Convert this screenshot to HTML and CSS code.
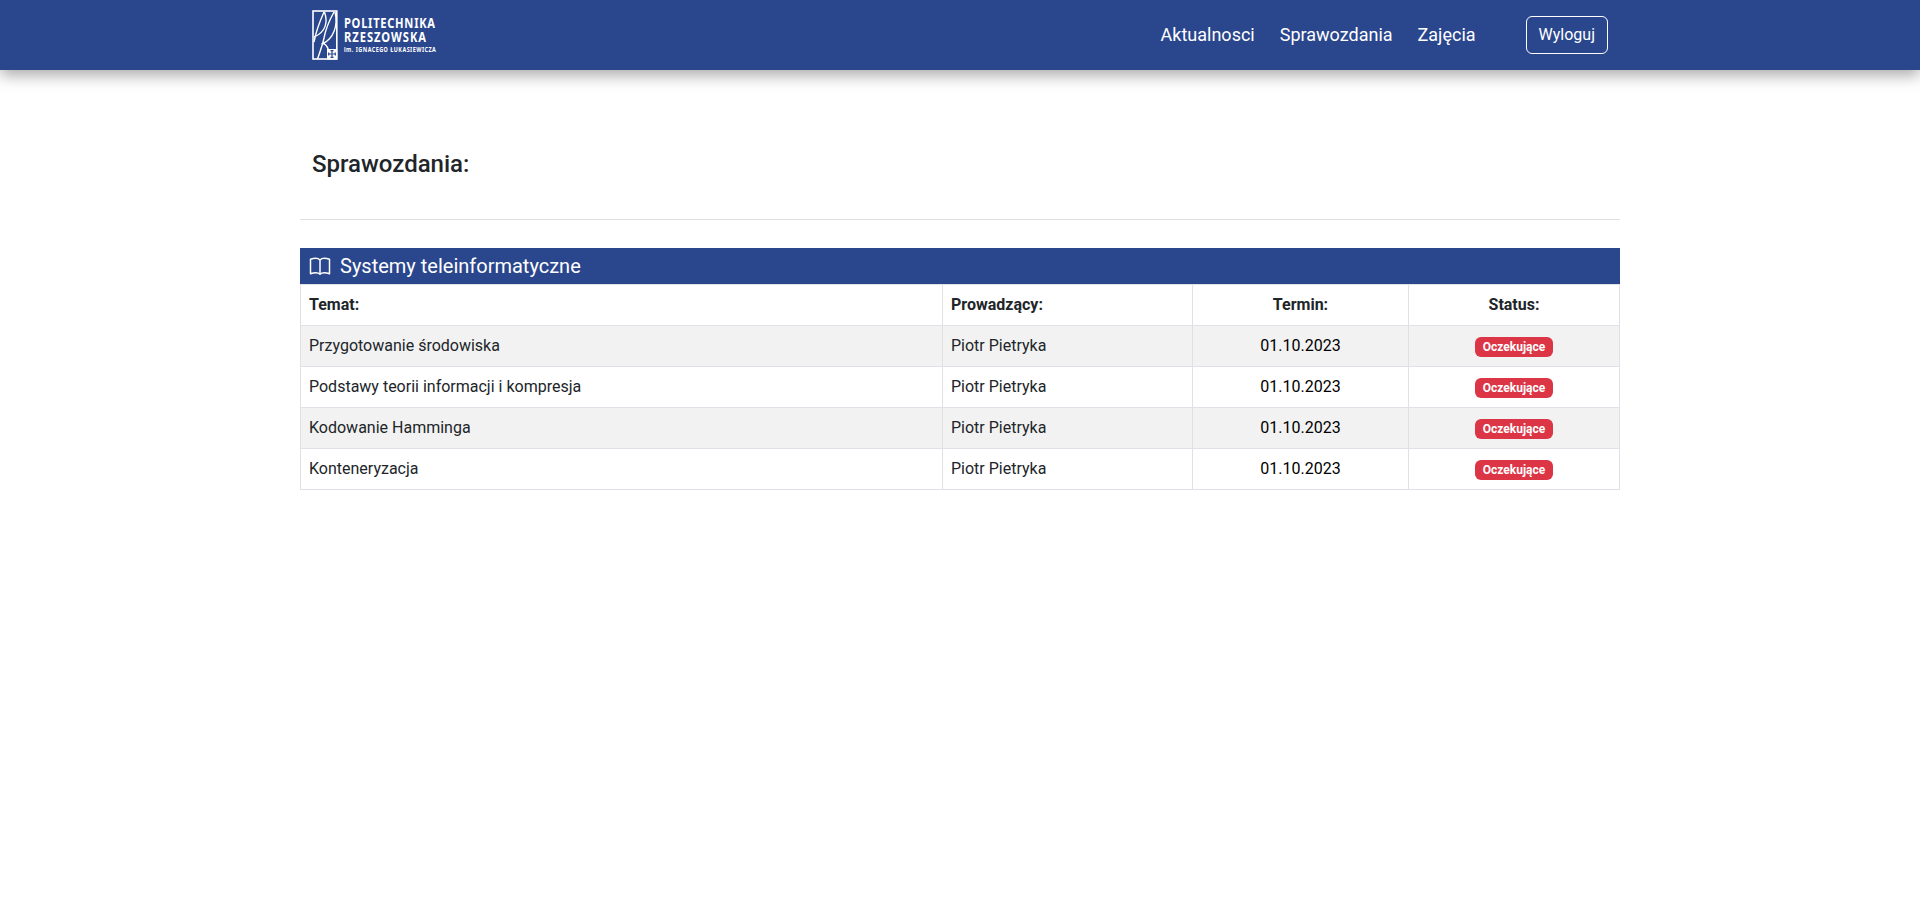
FILE: index.html
```html
<!DOCTYPE html>
<html lang="pl">
<head>
<meta charset="utf-8">
<title>Sprawozdania</title>
<link rel="stylesheet" href="styles.css">
</head>
<body>
<header class="navbar">
  <div class="container navbar-inner">
    <a class="brand">
      <svg class="logo" width="27" height="52" viewBox="0 0 27 52" fill="none" stroke="#fff">
        <rect x="1" y="2" width="23.8" height="48" stroke-width="1.6"/>
        <path d="M12 3C8 12 4 22 2 33M12.500 3C16 13 14 23 2 28M22 3C17 12 13.500 21 12 29C10.500 36 8 43 5.500 50M23 3C26.500 17 21 30 11 34.500C13.500 35 15.500 38 16.500 41" stroke-width="1.4"/>
        <rect x="15" y="40" width="10.300" height="10.500" fill="#fff" stroke="none"/>
        <path d="M20 41.200V48.800M16.200 45H23.800M18.500 41.700H21.500M18.500 48.300H21.500M16.700 43.500V46.500M23.300 43.500V46.500" stroke="#2a468d" stroke-width="1.200"/>
      </svg>
      <svg class="logo-text" width="96" height="52" viewBox="0 0 96 52">
        <text class="logo-name" transform="translate(0 19) scale(.82 1)" textLength="111" lengthAdjust="spacing">POLITECHNIKA</text>
        <text class="logo-name" transform="translate(0 33.300) scale(.82 1)" textLength="100" lengthAdjust="spacing">RZESZOWSKA</text>
        <text class="logo-patron" transform="translate(0 42.700) scale(.82 1)" textLength="112" lengthAdjust="spacing">im. IGNACEGO ŁUKASIEWICZA</text>
      </svg>
    </a>
    <nav class="nav">
      <a class="nav-link">Aktualnosci</a>
      <a class="nav-link">Sprawozdania</a>
      <a class="nav-link">Zajęcia</a>
      <button class="btn-logout">Wyloguj</button>
    </nav>
  </div>
</header>
<main class="container">
  <h1 class="title">Sprawozdania:</h1>
  <hr class="divider">
  <section>
    <h2 class="course">
      <svg class="course-icon" width="22" height="20" viewBox="0 0 22 20" fill="none" stroke="#fff" stroke-width="1.500" stroke-linejoin="round">
        <path d="M11 3.900C9.400 2.200 5 2.100 1.500 3.200V17.700C5 16.700 9.400 16.800 11 18.300C12.600 16.800 17 16.700 20.500 17.700V3.200C17 2.100 12.600 2.200 11 3.900ZM11 3.900V18.300"/>
      </svg>
      <span>Systemy teleinformatyczne</span>
    </h2>
    <table class="reports">
      <colgroup><col class="col-topic"><col class="col-teacher"><col class="col-date"><col class="col-status"></colgroup>
      <thead>
        <tr><th>Temat:</th><th>Prowadzący:</th><th class="center">Termin:</th><th class="center">Status:</th></tr>
      </thead>
      <tbody>
        <tr><td>Przygotowanie środowiska</td><td>Piotr Pietryka</td><td class="center dark">01.10.2023</td><td class="center"><span class="badge">Oczekujące</span></td></tr>
        <tr><td>Podstawy teorii informacji i kompresja</td><td>Piotr Pietryka</td><td class="center dark">01.10.2023</td><td class="center"><span class="badge">Oczekujące</span></td></tr>
        <tr><td>Kodowanie Hamminga</td><td>Piotr Pietryka</td><td class="center dark">01.10.2023</td><td class="center"><span class="badge">Oczekujące</span></td></tr>
        <tr><td>Konteneryzacja</td><td>Piotr Pietryka</td><td class="center dark">01.10.2023</td><td class="center"><span class="badge">Oczekujące</span></td></tr>
      </tbody>
    </table>
  </section>
</main>
</body>
</html>
```
FILE: styles.css
```css
*, *::before, *::after { box-sizing: border-box; }
body { margin: 0; background: #fff; color: #212529; font: 400 16px/1.5 Roboto, sans-serif; }
.container { width: 1320px; margin: 0 auto; }
.navbar { height: 70px; background: #2a468d; box-shadow: 0 5px 15px rgba(0, 0, 0, 0.35); }
.navbar-inner { height: 70px; padding: 0 12px; display: flex; align-items: center; justify-content: space-between; }
.brand { display: flex; gap: 5px; }
.logo-text { overflow: visible; font-family: "Noto Sans", sans-serif; font-weight: 700; fill: #fff; }
.logo-name { font-size: 13.6px; }
.logo-patron { font-size: 6.6px; }
.nav { display: flex; align-items: center; gap: 25px; }
.nav-link { padding-bottom: 2px; color: #fff; font-size: 18px; }
.btn-logout { height: 38px; margin-left: 25px; padding: 0 12px; border: 1px solid #fff; border-radius: 6px; background: transparent; color: #fff; font: 400 16px/24px Roboto, sans-serif; }
.title { margin: 80px 0 0; padding-left: 12px; font-size: 24px; font-weight: 500; line-height: 29px; }
.divider { height: 1px; margin: 40px 0 28px; border: 0; background: #dee0e2; }
.course { display: flex; align-items: center; gap: 9px; height: 36px; margin: 0; padding: 0 9px; background: #2a468d; color: #fff; font-size: 20px; font-weight: 400; line-height: 24px; }
.reports { width: 1320px; table-layout: fixed; border-collapse: collapse; }
.col-topic { width: 642px; }
.col-teacher { width: 250px; }
.col-date { width: 216px; }
.col-status { width: 211px; }
.reports th, .reports td { height: 41px; padding: 8px; border: 1px solid #dee2e6; text-align: left; line-height: 24px; }
.reports tbody tr:nth-child(odd) { background: #f2f2f2; }
.reports .center { text-align: center; }
.reports .dark { color: #000; }
.badge { display: inline-block; padding: 4.2px 7.8px; border-radius: 6px; background: #dc3545; color: #fff; font-size: 12px; font-weight: 700; line-height: 12px; vertical-align: baseline; }
```
